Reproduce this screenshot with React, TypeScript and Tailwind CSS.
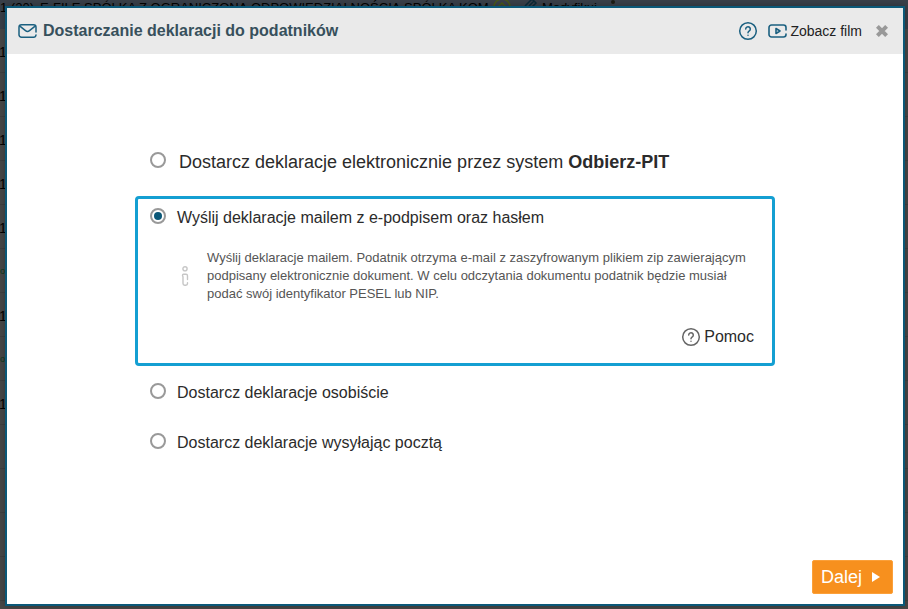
import { useState } from "react";

const taxpayerRows = ["1", "1", "1", "1", "1", "o", "1", "o", "1", "", "", "", ""];

const MailIcon = () => (
  <svg
    className="w-5 h-4 shrink-0"
    viewBox="0 0 20 16"
    fill="none"
    stroke="#1b6080"
    strokeWidth="1.5"
    strokeLinecap="round"
    strokeLinejoin="round"
  >
    <path d="M18 9V4.200A2.500 2.500 0 0 0 15.500 1.700h-12A2.500 2.500 0 0 0 1 4.200v7.500A2.500 2.500 0 0 0 3.500 14.200h12a2.500 2.500 0 0 0 2.500-2.200" />
    <path d="M2.500 3.700l5 4a3.200 3.200 0 0 0 4 0l5-4" />
  </svg>
);

const HelpIcon = () => (
  <svg
    className="size-5 shrink-0"
    viewBox="0 0 20 20"
    fill="none"
    stroke="currentColor"
    strokeWidth="1.5"
    strokeLinecap="round"
  >
    <circle cx="10" cy="10" r="8.3" />
    <path d="M7.700 8a2.300 2.300 0 1 1 3.700 1.900c-.9.600-1.400.9-1.400 1.800" />
    <path d="M10 14.200v.1" />
  </svg>
);

const VideoIcon = () => (
  <svg
    className="w-5 h-4 shrink-0"
    viewBox="0 0 20 16"
    fill="none"
    stroke="#1b6080"
    strokeWidth="1.6"
    strokeLinecap="round"
    strokeLinejoin="round"
  >
    <path d="M18 7V4.500A2.500 2.500 0 0 0 15.500 2h-12A2.500 2.500 0 0 0 1 4.500v7A2.500 2.500 0 0 0 3.500 14h12a2.500 2.500 0 0 0 2.500-2.500V11" />
    <path d="M8 5.500v5l4-2.500z" />
  </svg>
);

const CloseIcon = () => (
  <svg className="size-3" viewBox="0 0 12 12" stroke="#999" strokeWidth="4">
    <path d="M1.400 1.400l9.200 9.200M10.600 1.400l-9.200 9.200" />
  </svg>
);

const InfoIcon = () => (
  <svg
    className="w-2 h-5 shrink-0"
    viewBox="0 0 8 20"
    fill="none"
    stroke="#c6c6c6"
    strokeWidth="1.4"
    strokeLinecap="round"
    strokeLinejoin="round"
  >
    <circle cx="4" cy="2.800" r="2.100" />
    <path d="M6.500 13.500V9.700A1.500 1.500 0 0 0 5 8.200H2.500A1.200 1.200 0 0 0 1.500 9.400c0 .7.500 1 .5 1.600v6.500a1.700 1.700 0 0 0 1.700 1.700h1.100a1.700 1.700 0 0 0 1.700-1.700v-.8" />
  </svg>
);

const Backdrop = () => (
  <div className="absolute inset-0 overflow-hidden bg-[#484848] text-black" aria-hidden="true">
    <div className="flex h-[29px] items-start bg-[#3a404a] text-[13px] leading-4 whitespace-nowrap">
      <span className="w-10">1 (20),</span>
      <span>E-FILE SPÓŁKA Z OGRANICZONĄ ODPOWIEDZIALNOŚCIĄ SPÓŁKA KOM.</span>
    </div>
    {taxpayerRows.map((text, i) => (
      <div
        key={i}
        className={`flex h-11 items-center border-b border-[#404040] pt-0.5 ${
          text === "o" ? "text-[9px] text-[#0b3a1c]" : "text-sm -indent-px text-black"
        }`}
      >
        {text}
      </div>
    ))}
    <div className="absolute top-0 left-[492px] flex items-start text-[13px] leading-4">
      <svg className="w-5 h-4" viewBox="0 0 20 16" fill="none" stroke="#4a5a16" strokeWidth="1.5">
        <circle cx="10" cy="7" r="8" />
        <path d="M6 7l4-4 4 4" />
      </svg>
      <svg className="ml-3 w-4 h-4" viewBox="0 0 16 16" fill="none" stroke="#0c2a38" strokeWidth="1.5">
        <path d="M1 6l7-7 4 4-7 7M5 6l5-5" />
      </svg>
      <span className="ml-0.5">Modyfikuj</span>
      <span className="ml-3.5 size-1 rounded-full bg-[#1c1c14]" />
    </div>
  </div>
);

type OptionProps = {
  value: string;
  selected: string;
  onSelect: (value: string) => void;
  large?: boolean;
  children: React.ReactNode;
};

const Option = ({ value, selected, onSelect, large, children }: OptionProps) => (
  <label
    className={`flex items-center text-[#2b2b2b] cursor-pointer ${
      large ? "gap-[13px] text-lg/[26px]" : "gap-[11px] text-base/[26px]"
    }`}
  >
    <input
      type="radio"
      name="delivery"
      value={value}
      checked={selected === value}
      onChange={() => onSelect(value)}
      className="appearance-none size-4 shrink-0 mb-1 rounded-full border-2 border-[#999] bg-white bg-clip-content p-0.5 checked:bg-[#0b5878]"
    />
    <span>{children}</span>
  </label>
);

export default function App() {
  const [selected, setSelected] = useState("email");

  return (
    <div className="relative h-screen overflow-hidden font-['Liberation_Sans',Arial,sans-serif]">
      <Backdrop />

      <div className="relative flex h-full pt-1.5 pr-[3px] pb-[3px] pl-[5px]">
        <div
          role="dialog"
          aria-labelledby="dialog-title"
          className="flex flex-1 flex-col border-2 border-[#0b5878] bg-white shadow-[0_0_8px_rgba(0,0,0,0.3)]"
        >
          <header className="flex h-[46px] shrink-0 items-center bg-[#eaeaea] pl-[11px] pr-[15px]">
            <MailIcon />
            <h1 id="dialog-title" className="ml-[5px] text-base font-bold text-[#37505c]">
              Dostarczanie deklaracji do podatników
            </h1>
            <div className="ml-auto flex items-center">
              <button type="button" aria-label="Pomoc" className="text-[#1b6080]">
                <HelpIcon />
              </button>
              <a href="#film" className="ml-2.5 flex items-center gap-0.5 text-sm text-[#222]">
                <VideoIcon />
                Zobacz film
              </a>
              <button type="button" aria-label="Zamknij" className="ml-3.5">
                <CloseIcon />
              </button>
            </div>
          </header>

          <main className="mx-auto mt-[95px] w-full max-w-[640px]">
            <div className="px-[15px]">
              <Option value="system" selected={selected} onSelect={setSelected} large>
                Dostarcz deklaracje elektronicznie przez system <b>Odbierz-PIT</b>
              </Option>
            </div>

            <div className="mt-[21px] rounded border-3 border-[#149fd2] px-3 pt-1.5 pb-3.5">
              <Option value="email" selected={selected} onSelect={setSelected}>
                Wyślij deklaracje mailem z e-podpisem oraz hasłem
              </Option>
              <div className="mt-[18px] flex items-center pl-[31px] pr-1">
                <InfoIcon />
                <p className="ml-[18px] text-[13px] leading-[18px] text-[#555]">
                  Wyślij deklaracje mailem. Podatnik otrzyma e-mail z zaszyfrowanym plikiem zip
                  zawierającym podpisany elektronicznie dokument. W celu odczytania dokumentu
                  podatnik będzie musiał podać swój identyfikator PESEL lub NIP.
                </p>
              </div>
              <a
                href="#pomoc"
                className="mt-[22px] mr-1.5 flex items-center justify-end gap-[3px] text-base text-[#2b2b2b]"
              >
                <span className="text-[#666]">
                  <HelpIcon />
                </span>
                Pomoc
              </a>
            </div>

            <div className="mt-3.5 flex flex-col gap-6 px-[15px]">
              <Option value="personal" selected={selected} onSelect={setSelected}>
                Dostarcz deklaracje osobiście
              </Option>
              <Option value="post" selected={selected} onSelect={setSelected}>
                Dostarcz deklaracje wysyłając pocztą
              </Option>
            </div>
          </main>

          <footer className="mt-auto flex justify-end p-2.5">
            <button
              type="button"
              className="flex h-[34px] items-center gap-2.5 rounded-xs border border-[#fba03a] bg-[#f7901e] pl-2 pr-3 text-lg text-white"
            >
              Dalej
              <svg className="w-2 h-2.5" viewBox="0 0 8 10" fill="currentColor">
                <path d="M0 0l8 5-8 5z" />
              </svg>
            </button>
          </footer>
        </div>
      </div>
    </div>
  );
}
